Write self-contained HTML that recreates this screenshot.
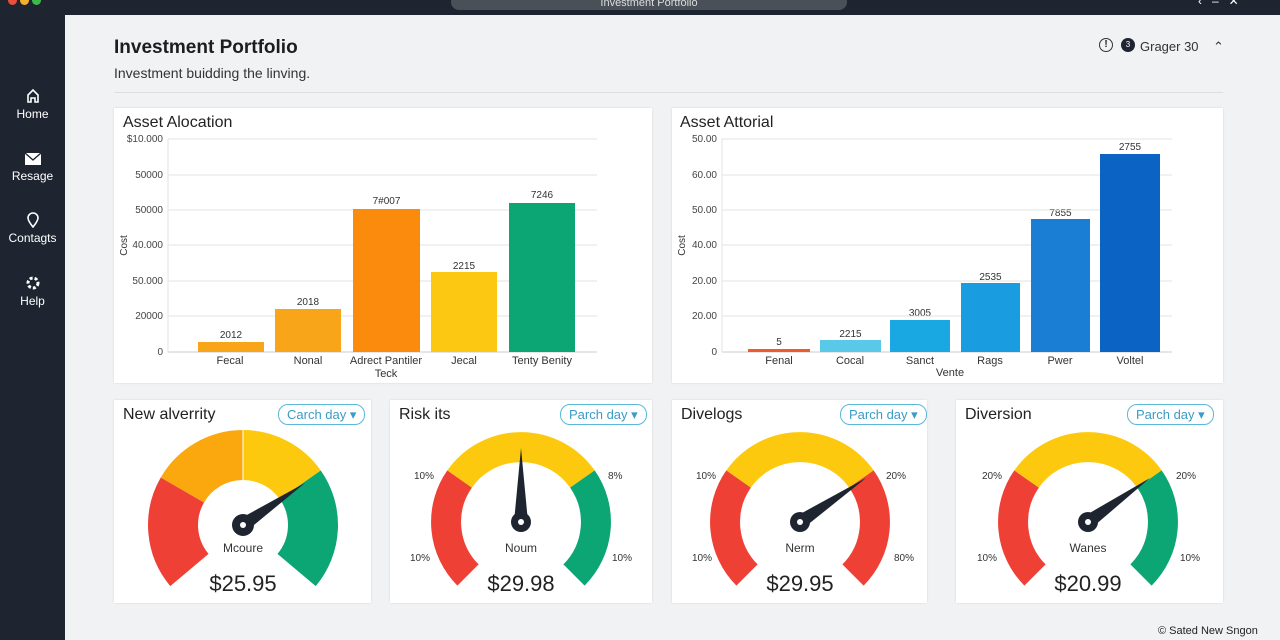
<!DOCTYPE html>
<html><head><meta charset="utf-8"><style>
*{margin:0;padding:0;box-sizing:border-box}
body{width:1280px;height:640px;overflow:hidden;background:#f1f2f3;font-family:"Liberation Sans",sans-serif;color:#222;position:relative}
.a{position:absolute}
.top{left:0;top:0;width:1280px;height:15px;background:#1e2531}
.side{left:0;top:15px;width:65px;height:625px;background:#1e2531}
.nav{width:65px;text-align:center;color:#fff;font-size:12px}
.card{background:#fff;box-shadow:0 0 2px rgba(0,0,0,.12)}
.t{font-size:16px;color:#222}
.pill{border:1px solid #5bb8d8;border-radius:10px;color:#3a9cc8;font-size:13px;padding:1px 8px;height:21px;line-height:17px;white-space:nowrap}
.yl{font-size:10px;color:#444;text-align:right;width:40px}
.xl{font-size:11px;color:#333;text-align:center}
.v{font-size:10px;color:#333;text-align:center}
.big{font-size:22px;color:#222;text-align:center}
.sm{font-size:10px;color:#333}
</style></head><body>
<div class="a top"></div>
<div class="a" style="left:8px;top:-4px;width:9px;height:9px;border-radius:50%;background:#e8503c"></div>
<div class="a" style="left:20px;top:-4px;width:9px;height:9px;border-radius:50%;background:#f2b02c"></div>
<div class="a" style="left:32px;top:-4px;width:9px;height:9px;border-radius:50%;background:#3dbb4a"></div>
<div class="a" style="left:451px;top:-6px;width:396px;height:16px;border-radius:8px;background:#4a5058;color:#ddd;font-size:11px;text-align:center;line-height:18px">Investment Portfolio</div>
<div class="a" style="left:1198px;top:-6px;color:#fff;font-size:12px">‹&nbsp;&nbsp;&nbsp;–&nbsp;&nbsp;&nbsp;✕</div>
<div class="a side"></div>
<div class="a nav" style="top:88px"><svg width="16" height="16" viewBox="0 0 16 16"><path d="M3 14V7l5-5 5 5v7h-3v-4H6v4z" fill="none" stroke="#fff" stroke-width="1.6"/></svg><div>Home</div></div>
<div class="a nav" style="top:152px"><svg width="18" height="14" viewBox="0 0 18 14"><rect x="1" y="1" width="16" height="12" fill="#fff"/><path d="M1 1l8 7 8-7" stroke="#1e2531" fill="none" stroke-width="1.4"/></svg><div>Resage</div></div>
<div class="a nav" style="top:212px"><svg width="14" height="16" viewBox="0 0 14 16"><path d="M7 15C3 10 2 8 2 6a5 5 0 0110 0c0 2-1 4-5 9z" fill="none" stroke="#fff" stroke-width="1.6"/></svg><div>Contagts</div></div>
<div class="a nav" style="top:275px"><svg width="16" height="16" viewBox="0 0 16 16"><circle cx="8" cy="8" r="5" fill="none" stroke="#fff" stroke-width="3" stroke-dasharray="3 2"/></svg><div>Help</div></div>

<div class="a" style="left:114px;top:37px;font-size:19px;font-weight:bold;color:#1d1d1d">Investment Portfolio</div>
<div class="a" style="left:114px;top:65px;font-size:14px;color:#333">Investment buidding the linving.</div>
<div class="a" style="left:114px;top:92px;width:1109px;height:1px;background:#dcdedf"></div>
<div class="a" style="left:1099px;top:38px;width:14px;height:14px;border:1.3px solid #333;border-radius:50%;font-size:10px;text-align:center;line-height:12px;font-weight:bold">!</div>
<div class="a" style="left:1121px;top:38px;width:14px;height:14px;background:#1e2531;border-radius:50%;color:#fff;font-size:8px;text-align:center;line-height:14px">3</div>
<div class="a" style="left:1140px;top:39px;font-size:13px;color:#333">Grager 30&nbsp;&nbsp;&nbsp;&nbsp;⌃</div>

<div class="a card" style="left:114px;top:108px;width:538px;height:275px"></div>
<div class="a card" style="left:672px;top:108px;width:551px;height:275px"></div>
<div class="a t" style="left:123px;top:114px">Asset Alocation</div>
<div class="a t" style="left:680px;top:114px">Asset Attorial</div>
<svg class="a" style="left:0;top:0;z-index:1" width="1280" height="400">
<g stroke="#e2e4e6" stroke-width="1">
<line x1="168" y1="139" x2="597" y2="139"/><line x1="168" y1="175" x2="597" y2="175"/><line x1="168" y1="210" x2="597" y2="210"/><line x1="168" y1="245" x2="597" y2="245"/><line x1="168" y1="281" x2="597" y2="281"/><line x1="168" y1="316" x2="597" y2="316"/><line x1="168" y1="352" x2="597" y2="352" stroke="#ccc"/><line x1="168" y1="139" x2="168" y2="352"/>
<line x1="722" y1="139" x2="1172" y2="139"/><line x1="722" y1="175" x2="1172" y2="175"/><line x1="722" y1="210" x2="1172" y2="210"/><line x1="722" y1="245" x2="1172" y2="245"/><line x1="722" y1="281" x2="1172" y2="281"/><line x1="722" y1="316" x2="1172" y2="316"/><line x1="722" y1="352" x2="1172" y2="352" stroke="#ccc"/><line x1="722" y1="139" x2="722" y2="352"/>
</g>
<rect x="198" y="342" width="66" height="10" fill="#f9a51a"/>
<rect x="275" y="309" width="66" height="43" fill="#f9a51a"/>
<rect x="353" y="209" width="67" height="143" fill="#fb8b0c"/>
<rect x="431" y="272" width="66" height="80" fill="#fcc812"/>
<rect x="509" y="203" width="66" height="149" fill="#0ca574"/>
<rect x="748" y="349" width="62" height="3" fill="#ef5b2a"/>
<rect x="820" y="340" width="61" height="12" fill="#5ac8e8"/>
<rect x="890" y="320" width="60" height="32" fill="#1aa8e2"/>
<rect x="961" y="283" width="59" height="69" fill="#1a9de0"/>
<rect x="1031" y="219" width="59" height="133" fill="#1a7fd4"/>
<rect x="1100" y="154" width="60" height="198" fill="#0b63c4"/>
</svg>
<div class="a yl" style="left:123px;top:134px">$10.000</div>
<div class="a yl" style="left:123px;top:170px">50000</div>
<div class="a yl" style="left:123px;top:205px">50000</div>
<div class="a yl" style="left:123px;top:240px">40.000</div>
<div class="a yl" style="left:123px;top:276px">50.000</div>
<div class="a yl" style="left:123px;top:311px">20000</div>
<div class="a yl" style="left:123px;top:347px">0</div>
<div class="a sm" style="left:114px;top:240px;transform:rotate(-90deg)">Cost</div>
<div class="a v" style="left:198px;top:330px;width:66px">2012</div>
<div class="a v" style="left:275px;top:297px;width:66px">2018</div>
<div class="a v" style="left:353px;top:196px;width:67px">7#007</div>
<div class="a v" style="left:431px;top:261px;width:66px">2215</div>
<div class="a v" style="left:509px;top:190px;width:66px">7246</div>
<div class="a xl" style="left:190px;top:355px;width:80px">Fecal</div>
<div class="a xl" style="left:268px;top:355px;width:80px">Nonal</div>
<div class="a xl" style="left:343px;top:355px;width:86px;line-height:13px">Adrect Pantiler Teck</div>
<div class="a xl" style="left:424px;top:355px;width:80px">Jecal</div>
<div class="a xl" style="left:497px;top:355px;width:90px">Tenty Benity</div>

<div class="a yl" style="left:677px;top:134px">50.00</div>
<div class="a yl" style="left:677px;top:170px">60.00</div>
<div class="a yl" style="left:677px;top:205px">50.00</div>
<div class="a yl" style="left:677px;top:240px">40.00</div>
<div class="a yl" style="left:677px;top:276px">20.00</div>
<div class="a yl" style="left:677px;top:311px">20.00</div>
<div class="a yl" style="left:677px;top:347px">0</div>
<div class="a sm" style="left:672px;top:240px;transform:rotate(-90deg)">Cost</div>
<div class="a v" style="left:748px;top:337px;width:62px">5</div>
<div class="a v" style="left:820px;top:329px;width:61px">2215</div>
<div class="a v" style="left:890px;top:308px;width:60px">3005</div>
<div class="a v" style="left:961px;top:272px;width:59px">2535</div>
<div class="a v" style="left:1031px;top:208px;width:59px">7855</div>
<div class="a v" style="left:1100px;top:142px;width:60px">2755</div>
<div class="a xl" style="left:739px;top:355px;width:80px">Fenal</div>
<div class="a xl" style="left:810px;top:355px;width:80px">Cocal</div>
<div class="a xl" style="left:880px;top:355px;width:80px">Sanct</div>
<div class="a xl" style="left:950px;top:355px;width:80px">Rags</div>
<div class="a xl" style="left:1020px;top:355px;width:80px">Pwer</div>
<div class="a xl" style="left:1090px;top:355px;width:80px">Voltel</div>
<div class="a xl" style="left:910px;top:367px;width:80px">Vente</div>

<div class="a card" style="left:114px;top:400px;width:257px;height:203px">
<div class="a t" style="left:9px;top:6px">New alverrity</div>
<div class="a pill" style="left:164px;top:4px">Carch day ▾</div>
<svg class="a" style="left:0;top:0" width="257" height="203"><g fill="none" stroke-width="50">
<path d="M75.4 170A70 70 0 0 1 68.4 90" stroke="#ee4035"/>
<path d="M68.4 90A70 70 0 0 1 129 55" stroke="#fba80f"/>
<path d="M129 55A70 70 0 0 1 186.3 84.8" stroke="#fdc90f"/>
<path d="M186.3 84.8A70 70 0 0 1 182.6 170" stroke="#0ca574"/></g>
<g stroke="#fff" stroke-width="1"><line x1="129" y1="30" x2="129" y2="80"/></g>
<polygon points="191,83 132.9,130.8 125.1,119.2" fill="#1e2531"/><circle cx="129" cy="125" r="11" fill="#1e2531"/><circle cx="129" cy="125" r="3" fill="#fff"/></svg>
<div class="a sm" style="left:90px;top:141px;width:78px;text-align:center;font-size:12px">Mcoure</div>
<div class="a big" style="left:60px;top:171px;width:138px">$25.95</div>
</div>

<div class="a card" style="left:390px;top:400px;width:262px;height:203px">
<div class="a t" style="left:9px;top:6px">Risk its</div>
<div class="a pill" style="left:170px;top:4px">Parch day ▾</div>
<svg class="a" style="left:0;top:0" width="262" height="203"><g fill="none" stroke-width="30">
<path d="M78 175A75 75 0 0 1 69.6 79" stroke="#ee4035"/>
<path d="M69.6 79A75 75 0 0 1 192.4 79" stroke="#fdc90f"/>
<path d="M192.4 79A75 75 0 0 1 184 175" stroke="#0ca574"/></g>
<polygon points="131,48 124,122 138,122" fill="#1e2531"/><circle cx="131" cy="122" r="10" fill="#1e2531"/><circle cx="131" cy="122" r="3" fill="#fff"/></svg>
<div class="a sm" style="left:24px;top:71px">10%</div><div class="a sm" style="left:218px;top:71px">8%</div>
<div class="a sm" style="left:20px;top:153px">10%</div><div class="a sm" style="left:222px;top:153px">10%</div>
<div class="a sm" style="left:92px;top:141px;width:78px;text-align:center;font-size:12px">Noum</div>
<div class="a big" style="left:62px;top:171px;width:138px">$29.98</div>
</div>

<div class="a card" style="left:672px;top:400px;width:255px;height:203px">
<div class="a t" style="left:9px;top:6px">Divelogs</div>
<div class="a pill" style="left:168px;top:4px">Parch day ▾</div>
<svg class="a" style="left:0;top:0" width="255" height="203"><g fill="none" stroke-width="30">
<path d="M75 175A75 75 0 0 1 66.6 79" stroke="#ee4035"/>
<path d="M66.6 79A75 75 0 0 1 189.4 79" stroke="#fdc90f"/>
<path d="M189.4 79A75 75 0 0 1 181 175" stroke="#ee4035"/></g>
<polygon points="194,78 131.9,127.8 124.1,116.2" fill="#1e2531"/><circle cx="128" cy="122" r="10" fill="#1e2531"/><circle cx="128" cy="122" r="3" fill="#fff"/></svg>
<div class="a sm" style="left:24px;top:71px">10%</div><div class="a sm" style="left:214px;top:71px">20%</div>
<div class="a sm" style="left:20px;top:153px">10%</div><div class="a sm" style="left:222px;top:153px">80%</div>
<div class="a sm" style="left:89px;top:141px;width:78px;text-align:center;font-size:12px">Nerm</div>
<div class="a big" style="left:59px;top:171px;width:138px">$29.95</div>
</div>

<div class="a card" style="left:956px;top:400px;width:267px;height:203px">
<div class="a t" style="left:9px;top:6px">Diversion</div>
<div class="a pill" style="left:171px;top:4px">Parch day ▾</div>
<svg class="a" style="left:0;top:0" width="267" height="203"><g fill="none" stroke-width="30">
<path d="M79 175A75 75 0 0 1 70.6 79" stroke="#ee4035"/>
<path d="M70.6 79A75 75 0 0 1 193.4 79" stroke="#fdc90f"/>
<path d="M193.4 79A75 75 0 0 1 185 175" stroke="#0ca574"/></g>
<polygon points="194,78 135.9,127.8 128.1,116.2" fill="#1e2531"/><circle cx="132" cy="122" r="10" fill="#1e2531"/><circle cx="132" cy="122" r="3" fill="#fff"/></svg>
<div class="a sm" style="left:26px;top:71px">20%</div><div class="a sm" style="left:220px;top:71px">20%</div>
<div class="a sm" style="left:21px;top:153px">10%</div><div class="a sm" style="left:224px;top:153px">10%</div>
<div class="a sm" style="left:93px;top:141px;width:78px;text-align:center;font-size:12px">Wanes</div>
<div class="a big" style="left:63px;top:171px;width:138px">$20.99</div>
</div>

<div class="a" style="left:1158px;top:625px;font-size:11px;color:#222">© Sated New Sngon</div>
</body></html>
